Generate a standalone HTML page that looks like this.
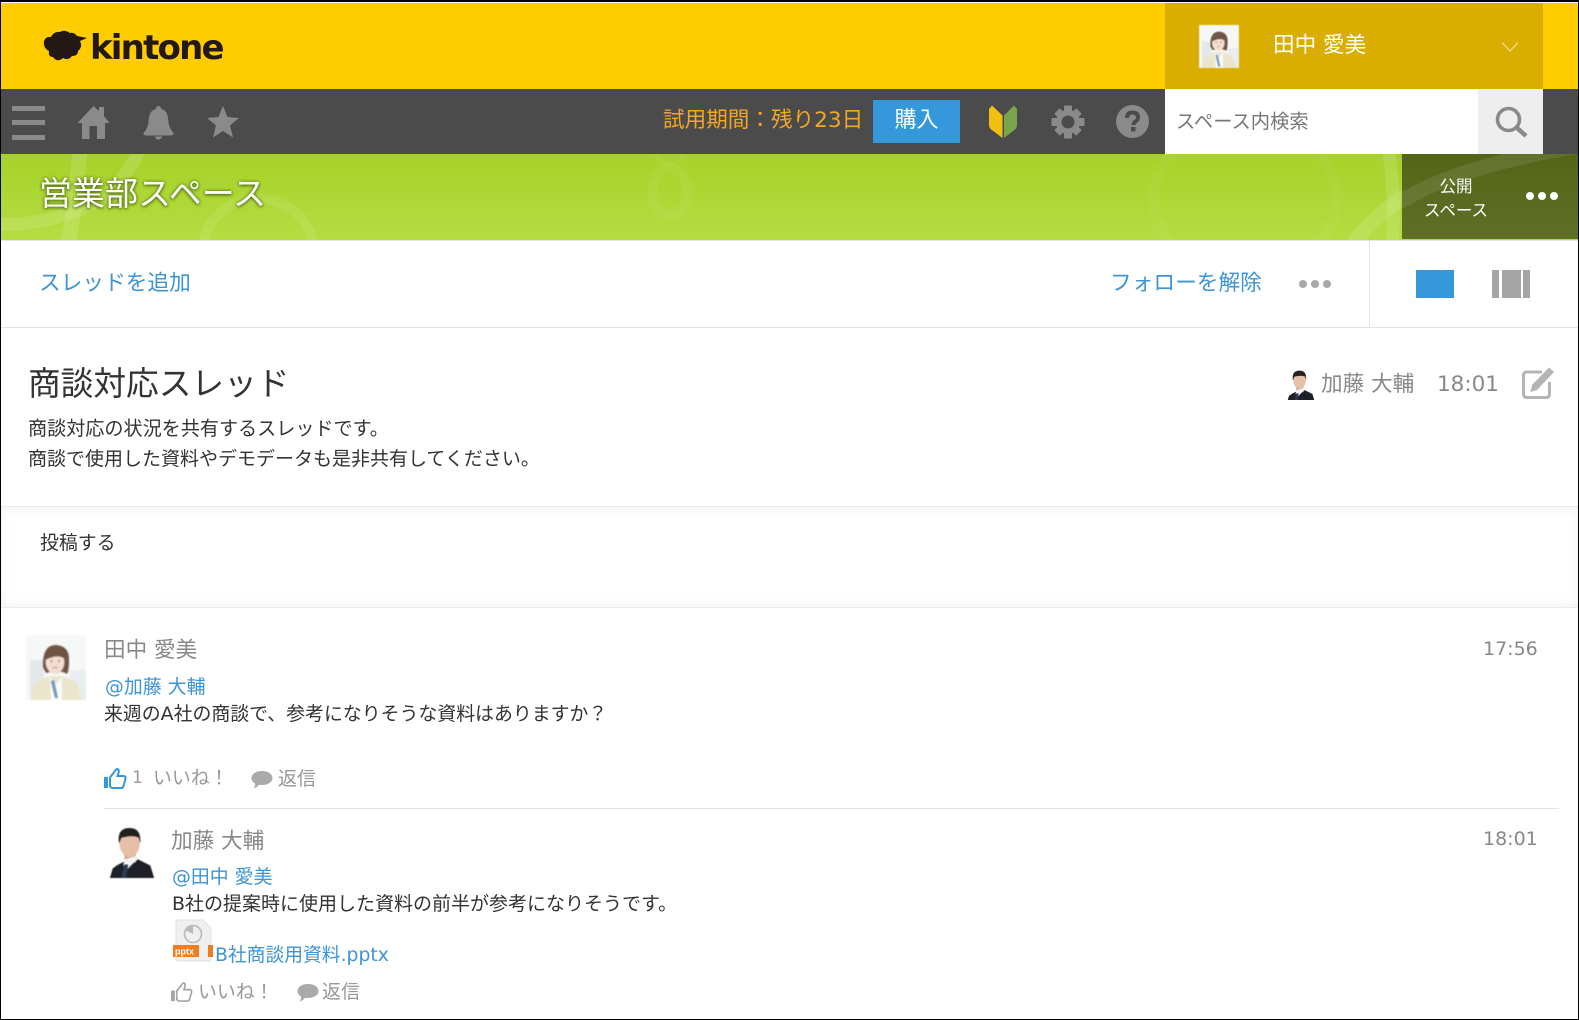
<!DOCTYPE html>
<html lang="ja"><head><meta charset="utf-8"><title>kintone</title>
<style>
html,body{margin:0;padding:0;background:#fff}
body{width:1579px;height:1020px;position:relative;overflow:hidden;font-family:"DejaVu Sans","Noto Sans CJK JP",sans-serif;color:#333}
.a{position:absolute}
.t{position:absolute;white-space:nowrap;line-height:30px;height:30px}
.blue{color:#3d94d6}.g{color:#888}.lg{color:#999}
svg{position:absolute;display:block}
</style></head><body>
<svg width="0" height="0" style="position:absolute"><defs>
<g id="woman">
<rect width="60" height="65" fill="#f6f8f8"/>
<rect x="4" y="25" width="14" height="40" fill="#e2e9eb"/>
<rect x="44" y="35" width="16" height="30" fill="#e8edef"/>
<path d="M5 65 L8 49 Q15 44 24 41 L36 41 Q46 44 51 48 L56 65Z" fill="#ebe5cd"/>
<path d="M24 42 L30 49 L36 42 L36 65 L25 65Z" fill="#fbfbf8"/>
<path d="M25 46 L29 63 L32 63 L28 45Z" fill="#6c93bd"/>
<path d="M17 32 Q16 10 30 10 Q44 11 43 26 Q43 36 41 39 L37 37 L24 37 L20 38Z" fill="#6f5343"/>
<ellipse cx="29" cy="27" rx="9.500" ry="12" fill="#f3dcd0"/>
<path d="M19 25 Q22 14 31 15 Q38 16 39 24 Q32 18 19 25Z" fill="#6f5343"/>
<circle cx="25.500" cy="26" r=".9" fill="#7a6258"/><circle cx="33" cy="26" r=".9" fill="#7a6258"/>
<rect x="26.500" y="32" width="5.500" height="1.200" fill="#d09c94"/>
</g>
<g id="man">
<rect width="46" height="54" fill="#fff"/>
<path d="M0 53 L3 43 Q8 39 15 36 L28 33 Q34 36 42 40 L46 53Z" fill="#1d2026"/>
<rect x="15" y="24" width="12" height="13" fill="#d8ac92"/>
<path d="M15 34 L14 40 L17 45 L25 37 L30 33 L27 30Z" fill="#f3f3f3"/>
<path d="M15 39 L12 53 L17 53 L19 39Z" fill="#2c3a55"/>
<ellipse cx="20.500" cy="17" rx="10.500" ry="14" fill="#e6bfa8"/>
<path d="M9.500 17 Q7 1 20.500 1 Q33 1 31.500 17 L30 11 Q24 8 12 11Z" fill="#25201d"/>
</g>
</defs></svg>

<!-- header -->
<div class="a" style="left:0;top:3px;width:1579px;height:86px;background:#ffcc00"></div>
<svg style="left:42px;top:28px" width="46" height="36" viewBox="0 0 46 36"><path fill="#231815" d="M2 13 Q4 8 9 9 Q12 3 18 4 Q22 1 28 5 Q32 4 35 8 L45 10 L38 13 Q41 19 36 23 Q36 28 30 28 Q26 33 21 30 Q15 35 11 29 Q6 29 7 23 Q1 20 2 13Z"/></svg>
<div class="t" style="left:90px;top:30px;font:bold 34px/36px 'DejaVu Sans',sans-serif;height:36px;color:#231815;letter-spacing:-1.800px">kintone</div>
<div class="a" style="left:1165px;top:3px;width:378px;height:86px;background:#d9ae00"></div>
<svg style="left:1199px;top:25px;filter:blur(.4px)" width="40" height="43" viewBox="0 0 60 65"><use href="#woman"/></svg>
<div class="t" style="left:1273px;top:31px;font-size:21.600px;color:#fff">田中 愛美</div>
<svg style="left:1501px;top:41px" width="18" height="12"><path d="M1 1.500 L9 10 L17 1.500" fill="none" stroke="#eed98a" stroke-width="1.300"/></svg>

<!-- nav -->
<div class="a" style="left:0;top:89px;width:1579px;height:65px;background:#4b4b4b"></div>
<div class="a" style="left:12px;top:106px;width:33px;height:5px;background:#8a8a8a"></div>
<div class="a" style="left:12px;top:120px;width:33px;height:5px;background:#8a8a8a"></div>
<div class="a" style="left:12px;top:135px;width:33px;height:5px;background:#8a8a8a"></div>
<svg style="left:77px;top:106px" width="33" height="33" viewBox="0 0 33 33"><path fill="#8a8a8a" d="M16.500 0 L22 5 V1 H27 V10 L32.500 17 H28 V33 H20 V20 H12.500 V33 H5 V17 H0.500Z"/></svg>
<svg style="left:143px;top:105px" width="31" height="35" viewBox="0 0 31 35"><path fill="#8a8a8a" d="M15.500 1 a2.500 2.500 0 0 1 2.500 3 C24 5 25 11 25.500 17 C26 23 29 26 30.500 28 Q31 30 28 30.500 H3 Q0 30 0.500 28 C2 26 5 23 5.500 17 C6 11 7 5 13 4 a2.500 2.500 0 0 1 2.500 -3Z M11.500 31.500 H19.500 Q18 34.500 15.500 34.500 Q13 34.500 11.500 31.500Z"/></svg>
<svg style="left:207px;top:106px" width="32" height="32" viewBox="0 0 32 32"><path fill="#8a8a8a" d="M16 0 L20.500 11 L32 12 L23 19.500 L26 31.500 L16 25 L6 31.500 L9 19.500 L0 12 L11.500 11Z"/></svg>
<div class="t" style="left:663px;top:106px;font-size:21.600px;color:#f5a623">試用期間：残り23日</div>
<div class="a" style="left:873px;top:100px;width:87px;height:43px;background:#3498db;color:#fff;font-size:22px;line-height:42px;text-align:center">購入</div>
<svg style="left:989px;top:105px" width="29" height="34" viewBox="0 0 29 34"><path fill="#f0c010" d="M0 4 L3 0.500 L13.500 10.500 V33 L1.500 24 Q0 22 0 20Z"/><path fill="#7ba54a" d="M28 4 L25 0.500 L15 10.500 V33 L26.500 24 Q28 22 28 20Z"/></svg>
<svg style="left:1051px;top:105px" width="34" height="34" viewBox="0 0 34 34"><g fill="#8a8a8a"><path fill-rule="evenodd" d="M17 5 a12 12 0 1 0 .01 0Z M17 10.500 a6.500 6.500 0 1 1 -.01 0Z"/><rect x="13" y="0.500" width="8" height="7" rx="1"/><rect x="13" y="26.500" width="8" height="7" rx="1"/><rect x="0.500" y="13" width="7" height="8" rx="1"/><rect x="26.500" y="13" width="7" height="8" rx="1"/><g transform="rotate(45 17 17)"><rect x="13" y="1.500" width="8" height="7" rx="1"/><rect x="13" y="25.500" width="8" height="7" rx="1"/><rect x="1.500" y="13" width="7" height="8" rx="1"/><rect x="25.500" y="13" width="7" height="8" rx="1"/></g></g></svg>
<svg style="left:1116px;top:105px" width="33" height="33" viewBox="0 0 33 33"><circle cx="16.500" cy="16.500" r="16.500" fill="#8a8a8a"/><path d="M11 13 Q11 7.500 16.500 7.500 Q22 7.500 22 12.500 Q22 15 19.500 16.500 Q17.500 17.500 17.500 20" fill="none" stroke="#4b4b4b" stroke-width="4"/><rect x="15" y="22" width="4.500" height="4.500" fill="#4b4b4b"/></svg>
<div class="a" style="left:1165px;top:89px;width:313px;height:65px;background:#fff"></div>
<div class="a" style="left:1478px;top:89px;width:65px;height:65px;background:#eee"></div>
<div class="t" style="left:1176px;top:107px;font-size:19.300px;color:#777">スペース内検索</div>
<svg style="left:1495px;top:106px" width="34" height="32" viewBox="0 0 34 32"><circle cx="13.500" cy="13.500" r="11" fill="none" stroke="#8a8a8a" stroke-width="3.600"/><path d="M21 21 L31 30" stroke="#8a8a8a" stroke-width="4.500"/></svg>

<!-- green band -->
<svg style="left:0;top:154px" width="1579" height="86" viewBox="0 0 1579 86">
<defs><linearGradient id="gr" x1="0" y1="0" x2="0" y2="1"><stop offset="0" stop-color="#a6d228"/><stop offset="1" stop-color="#b4dd42"/></linearGradient></defs>
<rect width="1579" height="86" fill="url(#gr)"/>
<g fill="none" stroke="#fff" stroke-opacity=".13">
<path d="M-20 70 Q60 75 110 38 Q128 20 140 -5" stroke-width="13"/>
<path d="M80 -5 Q76 50 68 90" stroke-width="15"/>
<path d="M1388 -5 Q1396 40 1392 90" stroke-width="13"/>
<path d="M1350 95 Q1405 10 1580 -12" stroke-width="15"/>
</g>
<g fill="none" stroke="#fff">
<ellipse cx="258" cy="95" rx="55" ry="50" stroke-width="10" stroke-opacity=".09"/>
<ellipse cx="670" cy="-2" rx="14" ry="12" stroke-width="5" stroke-opacity=".05"/>
<ellipse cx="670" cy="38" rx="18" ry="24" stroke-width="10" stroke-opacity=".05"/>
<ellipse cx="1245" cy="45" rx="92" ry="75" stroke-width="11" stroke-opacity=".035"/>
</g></svg>
<div class="a" style="left:1402px;top:154px;width:177px;height:85px;background:linear-gradient(#546517,#5f6f28)"></div>
<svg style="left:1402px;top:154px" width="177" height="85"><path d="M-30 70 Q20 18 177 -8" fill="none" stroke="#fff" stroke-opacity=".09" stroke-width="15"/></svg>
<div class="t" style="left:39px;top:176px;height:36px;line-height:36px;font-size:33px;color:#fff;text-shadow:0 1px 3px #4f6a10,0 0 3px #5d7a14">営業部スペース</div>
<div class="t" style="left:1405px;width:102px;text-align:center;top:172px;font-size:16.500px;color:#fff">公開</div>
<div class="t" style="left:1405px;width:102px;text-align:center;top:196px;font-size:16.500px;color:#fff">スペース</div>
<svg style="left:1525px;top:191px" width="34" height="10"><g fill="#fff"><circle cx="5" cy="5" r="4"/><circle cx="17" cy="5" r="4"/><circle cx="29" cy="5" r="4"/></g></svg>

<!-- toolbar -->
<div class="a" style="left:0;top:240px;width:1579px;height:1px;background:#e6e6e6"></div>
<div class="a" style="left:0;top:327px;width:1579px;height:1px;background:#e3e3e3"></div>
<div class="a" style="left:1369px;top:240px;width:1px;height:87px;background:#e3e3e3"></div>
<div class="t blue" style="left:39px;top:269px;font-size:21.700px">スレッドを追加</div>
<div class="t blue" style="left:1110px;top:269px;font-size:21.700px">フォローを解除</div>
<svg style="left:1298px;top:279px" width="36" height="10"><g fill="#a8a8a8"><circle cx="5" cy="5" r="4"/><circle cx="17" cy="5" r="4"/><circle cx="29" cy="5" r="4"/></g></svg>
<div class="a" style="left:1416px;top:270px;width:38px;height:28px;background:#3498db"></div>
<div class="a" style="left:1492px;top:270px;width:7px;height:28px;background:#a5a5a5"></div>
<div class="a" style="left:1502px;top:270px;width:19px;height:28px;background:#a5a5a5"></div>
<div class="a" style="left:1523px;top:270px;width:7px;height:28px;background:#a5a5a5"></div>

<!-- thread -->
<div class="t" style="left:28px;top:364px;height:40px;line-height:40px;font-size:32.700px;color:#333">商談対応スレッド</div>
<div class="t" style="left:28px;top:414px;font-size:19.100px">商談対応の状況を共有するスレッドです。</div>
<div class="t" style="left:28px;top:443.500px;font-size:19px">商談で使用した資料やデモデータも是非共有してください。</div>
<svg style="left:1287px;top:370px;filter:blur(.3px)" width="28" height="30" viewBox="0 0 46 50"><use href="#man"/></svg>
<div class="t g" style="left:1321px;top:370px;font-size:21.600px">加藤 大輔</div>
<div class="t g" style="left:1437px;top:370px;font-size:21.500px">18:01</div>
<svg style="left:1521px;top:366px" width="35" height="34" viewBox="0 0 35 34"><path d="M21 6 H6 Q2.500 6 2.500 9.500 V28 Q2.500 31.500 6 31.500 H25 Q28.500 31.500 28.500 28 V16" fill="none" stroke="#b4b4b4" stroke-width="3"/><path fill="#b4b4b4" d="M28 1.500 L33 6 L16 24 L9.500 26 L11 19Z"/></svg>

<!-- post box -->
<div class="a" style="left:0;top:506px;width:1579px;height:100px;border-top:1px solid #e9e9e9;border-bottom:1px solid #e9e9e9;background:#fff;box-shadow:inset 0 0 14px #f0f0f0"></div>
<div class="t" style="left:40px;top:528px;font-size:18.900px">投稿する</div>

<!-- comment 1 -->
<svg style="left:26px;top:635px;filter:blur(.8px)" width="60" height="65" viewBox="0 0 60 65"><use href="#woman"/></svg>
<div class="t g" style="left:104px;top:636px;font-size:21.600px">田中 愛美</div>
<div class="t g" style="left:1483px;top:634px;font-size:19px">17:56</div>
<div class="t blue" style="left:105px;top:672px;font-size:18.900px">@加藤 大輔</div>
<div class="t" style="left:104px;top:699px;font-size:18.900px">来週のA社の商談で、参考になりそうな資料はありますか？</div>
<svg style="left:104px;top:768px" width="23" height="21" viewBox="0 0 23 21"><rect x="0" y="9" width="4" height="11" fill="#3498db"/><path d="M6 9.500 L11 3 Q12 1 13.500 1 Q15.500 2 14.500 5 L13.500 8 H20 Q22 8.500 21.500 11 L19.500 18 Q19 20 17 20 H8 L6 18.500Z" fill="none" stroke="#3498db" stroke-width="2"/></svg>
<div class="t lg" style="left:132px;top:763px;font-size:17px">1</div>
<div class="t lg" style="left:153px;top:763px;font-size:18.900px">いいね！</div>
<svg style="left:251px;top:771px" width="22" height="18" viewBox="0 0 22 18"><path fill="#aaa" d="M11 0 C17 0 21.500 3 21.500 7 C21.500 11 17 14 11 14 Q9.500 14 8 13.700 Q6 16.500 2.500 17.500 Q4.500 15 4 12.500 C1.500 11 .5 9 .5 7 C.5 3 5 0 11 0Z"/></svg>
<div class="t lg" style="left:278px;top:764px;font-size:19px">返信</div>
<div class="a" style="left:104px;top:808px;width:1455px;height:1px;background:#e3e3e3"></div>

<!-- comment 2 -->
<svg style="left:109px;top:827px;filter:blur(.6px)" width="46" height="52" viewBox="0 0 46 54"><use href="#man"/></svg>
<div class="t g" style="left:171px;top:827px;font-size:21.600px">加藤 大輔</div>
<div class="t g" style="left:1483px;top:824px;font-size:19px">18:01</div>
<div class="t blue" style="left:172px;top:862px;font-size:18.900px">@田中 愛美</div>
<div class="t" style="left:172px;top:889px;font-size:19px">B社の提案時に使用した資料の前半が参考になりそうです。</div>
<svg style="left:173px;top:919px" width="42" height="44" viewBox="0 0 42 44">
<path d="M3 1 H30 L38 9 V40 Q38 42 36 42 H5 Q3 42 3 40Z" fill="#efefef" stroke="#e2e2e2"/>
<circle cx="20" cy="15" r="8.500" fill="none" stroke="#b9b9b9" stroke-width="1.600"/><path d="M20 15 V6 A9 9 0 0 0 12 11Z" fill="#b9b9b9"/>
<rect x="0" y="26" width="26" height="12" fill="#ef7d22"/><text x="2" y="35.500" font-family="Liberation Sans,sans-serif" font-weight="700" font-size="9" fill="#fff">pptx</text>
<rect x="35" y="26" width="5" height="12" fill="#ef7d22"/></svg>
<div class="t blue" style="left:215px;top:941px;font-size:18.800px">B社商談用資料.pptx</div>
<svg style="left:171px;top:982px" width="22" height="20" viewBox="0 0 23 21"><rect x="0" y="9" width="4" height="11" fill="#a5a5a5"/><path d="M6 9.500 L11 3 Q12 1 13.500 1 Q15.500 2 14.500 5 L13.500 8 H20 Q22 8.500 21.500 11 L19.500 18 Q19 20 17 20 H8 L6 18.500Z" fill="none" stroke="#a5a5a5" stroke-width="1.800"/></svg>
<div class="t lg" style="left:198px;top:977px;font-size:18.900px">いいね！</div>
<svg style="left:297px;top:984px" width="22" height="18" viewBox="0 0 22 18"><path fill="#aaa" d="M11 0 C17 0 21.500 3 21.500 7 C21.500 11 17 14 11 14 Q9.500 14 8 13.700 Q6 16.500 2.500 17.500 Q4.500 15 4 12.500 C1.500 11 .5 9 .5 7 C.5 3 5 0 11 0Z"/></svg>
<div class="t lg" style="left:322px;top:977px;font-size:19px">返信</div>

<!-- screenshot frame -->
<div class="a" style="left:0;top:0;width:1579px;height:1.500px;background:#000"></div>
<div class="a" style="left:0;top:0;width:1px;height:1020px;background:#000"></div>
<div class="a" style="left:1578px;top:0;width:1px;height:1020px;background:#000"></div>
<div class="a" style="left:0;top:1019px;width:1579px;height:1px;background:#000"></div>
</body></html>
